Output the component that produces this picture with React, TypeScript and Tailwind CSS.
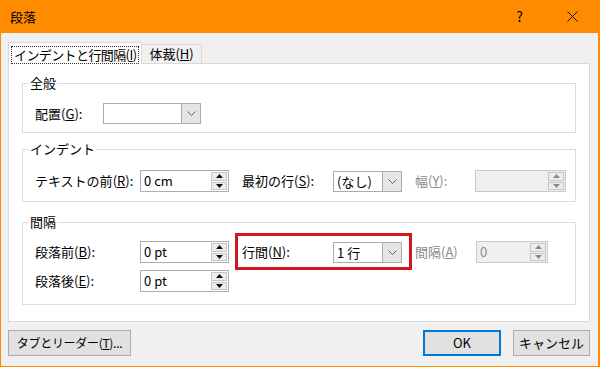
import type { ReactNode } from "react"
import clsx from "clsx"

const jp = "font-['Meiryo_UI','Noto_Sans_CJK_JP',sans-serif]"

function Tri({ up, disabled }: { up?: boolean; disabled?: boolean }) {
  return (
    <svg width="7" height="4" viewBox="0 0 7 4">
      <path d={up ? "M0 4 L3.5 0 L7 4 Z" : "M0 0 L3.5 4 L7 0 Z"} fill={disabled ? "#8a8a8a" : "#111"} />
    </svg>
  )
}

function Spin({ value, className, disabled }: { value?: string; className: string; disabled?: boolean }) {
  return (
    <div
      className={clsx(
        "flex h-[22px] border",
        disabled ? "border-[#c9c9c9] bg-[#efefef] text-[#8a8a8a]" : "border-[#abadb3] bg-white text-black",
        className
      )}
    >
      <div className="flex-1 whitespace-pre pl-[3px] text-[13px] leading-[20px]">{value}</div>
      <div className="flex w-[17px] flex-col gap-[1px] py-[1px] pr-[1px]">
        <div className="flex flex-1 items-center justify-center border border-[#c6c6c6] bg-[#ececec]">
          <Tri up disabled={disabled} />
        </div>
        <div className="flex flex-1 items-center justify-center border border-[#c6c6c6] bg-[#ececec]">
          <Tri disabled={disabled} />
        </div>
      </div>
    </div>
  )
}

function Combo({ value, className }: { value?: string; className: string }) {
  return (
    <div className={clsx("flex h-[21px] border border-[#acacac] bg-white", className)}>
      <div className="flex-1 whitespace-pre pl-[3px] text-[13px] leading-[19px]">{value}</div>
      <div className="flex w-[19px] items-center justify-center border-l border-[#acacac] bg-[#e5e5e5]">
        <svg width="9" height="5" viewBox="0 0 9 5">
          <path d="M0.5 0.5 L4.5 4.5 L8.5 0.5" fill="none" stroke="#606060" strokeWidth="1" />
        </svg>
      </div>
    </div>
  )
}

function Label({ text, keyChar, tail = ":", className, disabled }: { text: string; keyChar: string; tail?: string; className: string; disabled?: boolean }) {
  return (
    <div className={clsx("shrink-0 whitespace-nowrap text-[13px] leading-[20px]", disabled ? "text-[#8a8a8a]" : "text-black", className)}>
      {text}(<u>{keyChar}</u>){tail}
    </div>
  )
}

function Group({ title, className, children }: { title: string; className: string; children: ReactNode }) {
  return (
    <fieldset className={clsx("min-w-0 border border-[#dcdcdc]", className)}>
      <legend className="ml-[6px] px-[1px] text-[13px] leading-[16px] text-black">{title}</legend>
      <div className="pl-[12px]">{children}</div>
    </fieldset>
  )
}

export default function App() {
  return (
    <div className={clsx("flex h-[367px] w-[600px] flex-col bg-[#ff8c00]", jp)}>
      {/* title bar */}
      <div className="flex h-[33px] shrink-0 items-center pl-[10px] pr-[22px] text-black">
        <span className="text-[13px]">段落</span>
        <span className="ml-auto mr-[44px] text-[14px]">?</span>
        <svg width="11" height="11" viewBox="0 0 11 11">
          <path d="M0.5 0.5 L10.5 10.5 M10.5 0.5 L0.5 10.5" stroke="#111" strokeWidth="1" />
        </svg>
      </div>

      <div className="mb-[1px] ml-[1px] mr-[2px] flex flex-1 flex-col bg-[#f0f0f0] pl-[7px]">
        {/* tabs */}
        <div className="mt-[9px] flex items-end whitespace-nowrap text-[13px] leading-[16px]">
          <div className="relative z-10 -mb-px h-[22px] border border-b-0 border-[#d9d9d9] bg-white px-[2px] pt-[3px]">
            <span className="inline-block border border-dotted border-[#333] px-[2px] tracking-[-0.6px]">
              インデントと行間隔(<u>I</u>)
            </span>
          </div>
          <div className="h-[19px] border border-b-0 border-l-0 border-[#d9d9d9] bg-[#f0f0f0] px-[7px] pt-[1px]">
            体裁(<u>H</u>)
          </div>
        </div>

        {/* panel */}
        <div className="h-[259px] w-[582px] border border-[#d9d9d9] bg-white px-[13px] pt-[11px]">
          <Group title="全般" className="pb-[8px]">
            <div className="flex items-center pt-[12px]">
              <Label text="配置" keyChar="G" className="w-[68px]" />
              <Combo className="w-[98px]" />
            </div>
          </Group>

          <Group title="インデント" className="mt-[8px] pb-[9px]">
            <div className="flex items-center pt-[13px]">
              <Label text="テキストの前" keyChar="R" className="w-[105px]" />
              <Spin value="0 cm" className="w-[89px]" />
              <Label text="最初の行" keyChar="S" className="ml-[13px] w-[91px]" />
              <Combo value="(なし)" className="w-[69px]" />
              <Label text="幅" keyChar="Y" disabled className="ml-[13px] w-[60px]" />
              <Spin disabled className="w-[91px]" />
            </div>
          </Group>

          <Group title="間隔" className="mt-[12px] pb-[12px]">
            <div className="flex flex-col gap-[7px] pt-[11px]">
              <div className="flex items-center">
                <Label text="段落前" keyChar="B" className="w-[105px]" />
                <Spin value="0 pt" className="w-[89px]" />
                <div className="relative ml-[13px] flex items-center">
                  <Label text="行間" keyChar="N" className="w-[91px]" />
                  <Combo value="1 行" className="w-[69px]" />
                  <span className="absolute -bottom-[7px] -left-[7px] -right-[10px] -top-[9px] border-[3px] border-[#d4151d]" />
                </div>
                <Label text="間隔" keyChar="A" tail="" disabled className="ml-[13px] w-[61px]" />
                <Spin value="0" disabled className="w-[72px]" />
              </div>
              <div className="flex items-center">
                <Label text="段落後" keyChar="E" className="w-[105px]" />
                <Spin value="0 pt" className="w-[89px]" />
              </div>
            </div>
          </Group>
        </div>

        {/* buttons */}
        <div className="mt-[8px] flex pr-[8px] text-[13px]">
          <button className="h-[26px] w-[123px] whitespace-nowrap border border-[#adadad] bg-[#e1e1e1] text-[12px] tracking-[-0.3px] text-black">
            タブとリーダー(<u>T</u>)...
          </button>
          <button className="ml-auto h-[26px] w-[78px] border-2 border-[#0078d7] bg-[#e1e1e1] text-black">OK</button>
          <button className="ml-[12px] h-[26px] w-[77px] border border-[#adadad] bg-[#e1e1e1] text-black">キャンセル</button>
        </div>
      </div>
    </div>
  )
}
